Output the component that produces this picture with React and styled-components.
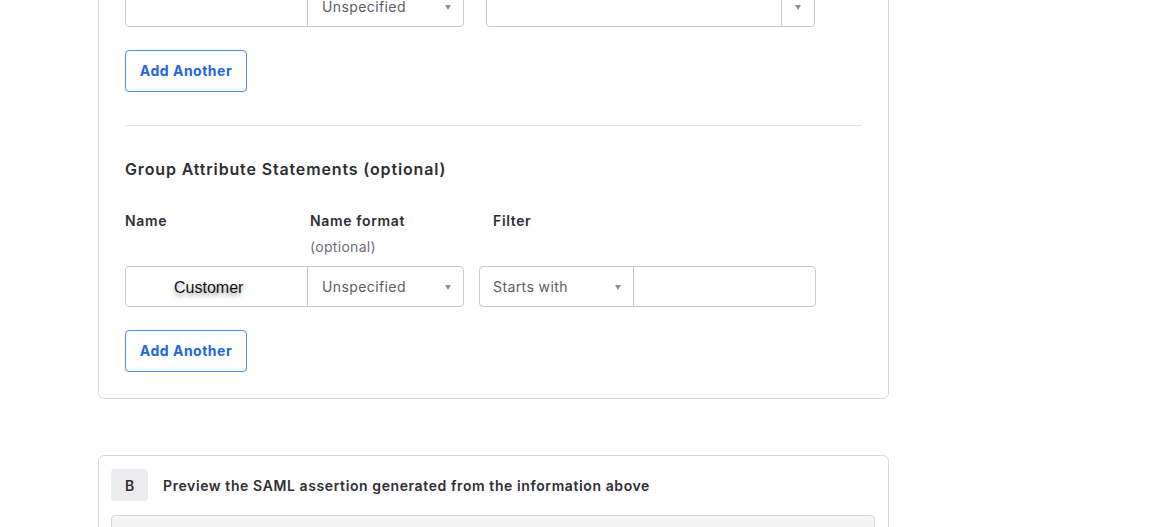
import React from "react";
import styled, { createGlobalStyle } from "styled-components";

const Global = createGlobalStyle`
  html, body { margin: 0; padding: 0; background: #ffffff; }
  body { font-family: Inter, "Noto Sans", Arial, sans-serif; color: #1d1d21; overflow: hidden; }
  * { box-sizing: border-box; }
`;

const Page = styled.div`
  padding-left: 98px;
  width: 889px;
`;

const Card = styled.section`
  width: 791px;
  border: 1px solid #d8d8dc;
  border-radius: 6px;
  background: #fff;
  margin-top: ${(p) => p.$mt}px;
  padding: ${(p) => p.$pad};
`;

const FieldRow = styled.div`
  display: flex;
  gap: ${(p) => p.$gap}px;
`;

const Composite = styled.div`
  display: flex;
  width: ${(p) => p.$w}px;
  height: 41px;
  border: 1px solid #c9c9ce;
  border-radius: 4px;
  overflow: hidden;
  background: #fff;
`;

const TextPart = styled.div`
  width: ${(p) => p.$w}px;
  flex: ${(p) => (p.$w ? "none" : "1")};
  height: 100%;
  display: flex;
  align-items: center;
  border-left: ${(p) => (p.$divided ? "1px solid #c9c9ce" : "none")};
  padding-left: ${(p) => p.$pl || 0}px;
  padding-top: ${(p) => (p.$pl ? 3 : 0)}px;
`;

const PastedText = styled.span`
  font-family: "Liberation Sans", Arial, sans-serif;
  font-size: 16px;
  color: #111;
  text-shadow: 0 3px 4px rgba(0, 0, 0, 0.4);
`;

const SelectPart = styled.div`
  width: ${(p) => p.$w}px;
  flex: none;
  height: 100%;
  display: flex;
  align-items: center;
  justify-content: ${(p) => (p.$only ? "center" : "space-between")};
  padding: ${(p) => (p.$only ? "0" : `0 12px 0 ${p.$pl}px`)};
  border-left: ${(p) => (p.$divided ? "1px solid #c9c9ce" : "none")};
  font-size: 14px;
  letter-spacing: 0.4px;
  color: #5c5c66;
`;

const Caret = styled.span`
  width: 0;
  height: 0;
  border-left: 3.5px solid transparent;
  border-right: 3.5px solid transparent;
  border-top: 5px solid #8e8e96;
  margin-top: 1px;
`;

const AddButton = styled.button`
  display: block;
  width: 122px;
  height: 42px;
  margin-top: 23px;
  border: 1px solid #4d8cf2;
  border-radius: 4px;
  background: #fff;
  color: #1f66e0;
  font-family: Inter, "Noto Sans", Arial, sans-serif;
  font-size: 14px;
  font-weight: 700;
  letter-spacing: 0.5px;
  padding: 0 0 2px;
  cursor: pointer;
`;

const Divider = styled.hr`
  margin: 33px 0 0;
  border: none;
  border-top: 1px solid #e4e4e7;
  height: 0;
`;

const Heading = styled.h3`
  margin: 31px 0 0;
  font-size: 16px;
  line-height: 24px;
  font-weight: 600;
  letter-spacing: 0.85px;
  color: #2e2e34;
`;

const LabelRow = styled.div`
  display: flex;
  margin-top: 30px;
`;

const LabelCol = styled.div`
  width: ${(p) => p.$w}px;
  display: flex;
  flex-direction: column;
`;

const Label = styled.span`
  font-size: 14px;
  line-height: 20px;
  font-weight: 600;
  letter-spacing: 0.65px;
  color: #2e2e34;
`;

const Hint = styled.span`
  font-size: 14px;
  line-height: 20px;
  margin-top: 6px;
  letter-spacing: 0.3px;
  color: #6e6e78;
`;

const InputRow = styled(FieldRow)`
  margin-top: 9px;
`;

const PreviewHeader = styled.div`
  display: flex;
  align-items: center;
  gap: 15px;
`;

const Badge = styled.span`
  width: 37px;
  height: 32px;
  border-radius: 4px;
  background: #ececef;
  display: flex;
  align-items: center;
  justify-content: center;
  font-size: 14px;
  font-weight: 600;
  color: #2e2e34;
`;

const PreviewTitle = styled.span`
  font-size: 14px;
  font-weight: 600;
  letter-spacing: 0.6px;
  color: #2e2e34;
`;

const PreviewBox = styled.div`
  margin-top: 14px;
  height: 200px;
  border: 1px solid #d8d8dc;
  border-radius: 4px;
  background: #f4f4f5;
`;

function Select({ w, pl, text, divided }) {
  return (
    <SelectPart $w={w} $pl={pl} $divided={divided}>
      <span>{text}</span>
      <Caret />
    </SelectPart>
  );
}

export default function App() {
  return (
    <>
      <Global />
      <Page>
        <Card $mt={-41} $pad="26px 26px 26px 26px">
          <FieldRow $gap={22}>
            <Composite $w={339}>
              <TextPart $w={181} />
              <Select w={156} pl={14} text="Unspecified" divided />
            </Composite>
            <Composite $w={329}>
              <TextPart />
              <SelectPart $w={33} $only $divided>
                <Caret />
              </SelectPart>
            </Composite>
          </FieldRow>
          <AddButton type="button">Add Another</AddButton>
          <Divider />
          <Heading>Group Attribute Statements (optional)</Heading>
          <LabelRow>
            <LabelCol $w={185}>
              <Label>Name</Label>
            </LabelCol>
            <LabelCol $w={183}>
              <Label>Name format</Label>
              <Hint>(optional)</Hint>
            </LabelCol>
            <LabelCol $w={200}>
              <Label>Filter</Label>
            </LabelCol>
          </LabelRow>
          <InputRow $gap={15}>
            <Composite $w={339}>
              <TextPart $w={181} $pl={48}>
                <PastedText>Customer</PastedText>
              </TextPart>
              <Select w={156} pl={14} text="Unspecified" divided />
            </Composite>
            <Composite $w={337}>
              <Select w={153} pl={13} text="Starts with" />
              <TextPart $divided />
            </Composite>
          </InputRow>
          <AddButton type="button">Add Another</AddButton>
        </Card>
        <Card $mt={56} $pad="13px 13px 0 12px">
          <PreviewHeader>
            <Badge>B</Badge>
            <PreviewTitle>Preview the SAML assertion generated from the information above</PreviewTitle>
          </PreviewHeader>
          <PreviewBox />
        </Card>
      </Page>
    </>
  );
}
